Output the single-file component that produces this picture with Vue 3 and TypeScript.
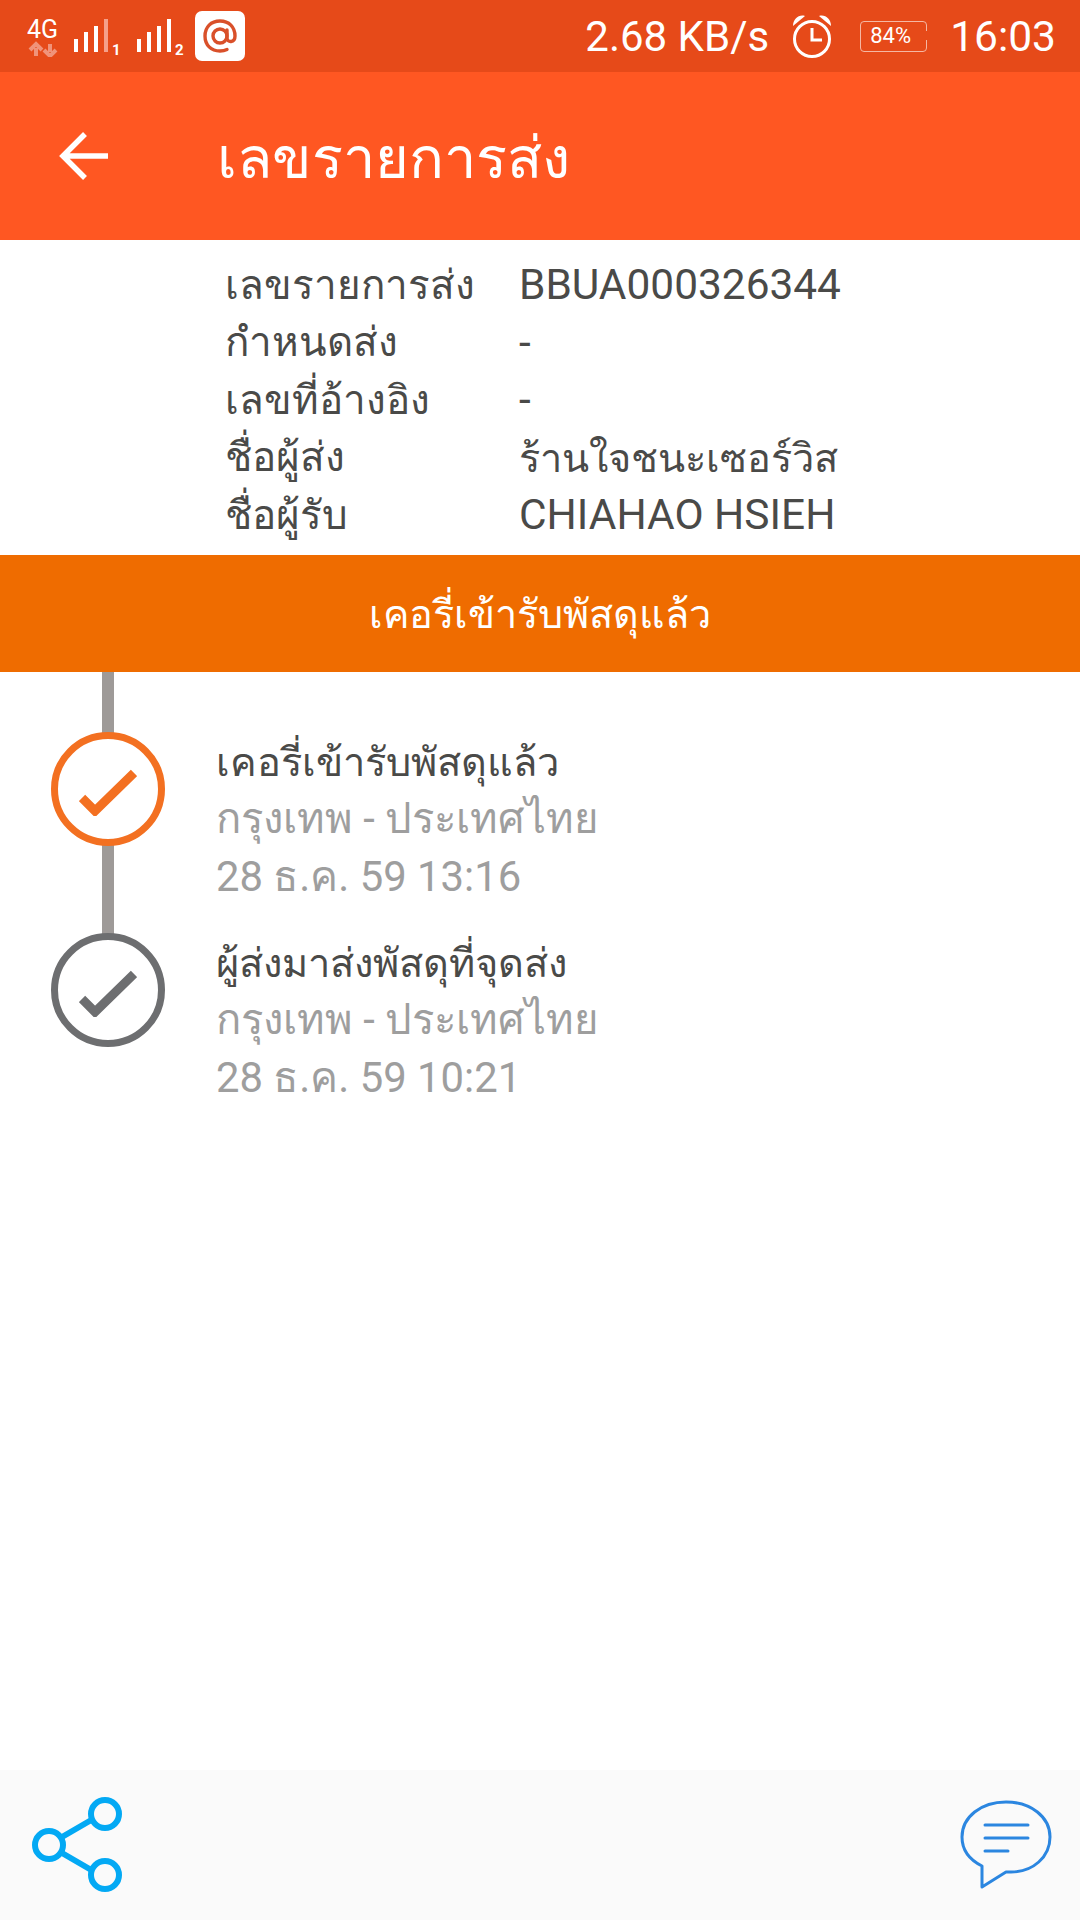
<template>
  <div class="screen">
    <!-- status bar -->
    <div class="status-bar">
      <div class="status-left">
        <svg class="net" width="38" height="42" viewBox="0 0 38 42">
          <text x="0" y="23" class="net-text">4G</text>
          <path d="M9 41V33M3 35l6-6 6 6" fill="none" stroke="#f0937a" stroke-width="4" />
          <path d="M23 29v8M17 35l6 6 6-6" fill="none" stroke="#f0937a" stroke-width="4" />
        </svg>
        <svg class="signal" width="50" height="42" viewBox="0 0 50 42">
          <rect x="0" y="20" width="4" height="13" fill="#fff" />
          <rect x="10" y="13" width="4" height="20" fill="#fff" />
          <rect x="20" y="7" width="4" height="26" fill="#fff" />
          <rect x="30" y="0" width="4" height="33" fill="#f5a08a" />
          <text x="38" y="36" class="sim">1</text>
        </svg>
        <svg class="signal" width="50" height="42" viewBox="0 0 50 42">
          <rect x="0" y="20" width="4" height="13" fill="#fff" />
          <rect x="10" y="13" width="4" height="20" fill="#fff" />
          <rect x="20" y="7" width="4" height="26" fill="#fff" />
          <rect x="30" y="0" width="4" height="33" fill="#fff" />
          <text x="38" y="36" class="sim">2</text>
        </svg>
        <div class="mail-badge">
          <svg width="36" height="36" viewBox="0 0 36 36" fill="none" stroke="#d9502a" stroke-width="3.4">
            <circle cx="18" cy="18" r="7" />
            <path d="M25 12v8c0 5 8 5 8-2C33 9 27 3 18 3S3 9 3 18s6 15 15 15c3 0 5-.5 7-1.500" stroke-linecap="round" />
          </svg>
        </div>
      </div>
      <div class="status-right">
        <span class="speed">2.68 KB/s</span>
        <svg class="alarm" width="40" height="44" viewBox="0 0 40 44" fill="none" stroke="#fff" stroke-width="3">
          <circle cx="20" cy="25" r="17.500" />
          <path d="M20 14v12h10" />
          <path d="M1 12C1 5 7 0 13 2z" fill="#fff" stroke="none" />
          <path d="M39 12C39 5 33 0 27 2z" fill="#fff" stroke="none" />
        </svg>
        <div class="battery">
          <span>84%</span>
          <i class="battery-tip"></i>
        </div>
        <span class="clock">16:03</span>
      </div>
    </div>

    <!-- toolbar -->
    <div class="toolbar">
      <svg class="back" width="50" height="50" viewBox="0 0 50 50" fill="none" stroke="#fff" stroke-width="5.500">
        <path d="M3 25h46M26 3L4 25l22 22" />
      </svg>
      <span class="toolbar-title">เลขรายการส่ง</span>
    </div>

    <!-- shipment details -->
    <div class="details">
      <div v-for="row in details" :key="row.label" class="detail-row">
        <span class="detail-label">{{ row.label }}</span>
        <span class="detail-value" :class="{ latin: row.latin }">{{ row.value }}</span>
      </div>
    </div>

    <div class="banner">เคอรี่เข้ารับพัสดุแล้ว</div>

    <!-- timeline -->
    <div class="timeline">
      <i class="track"></i>
      <div v-for="item in events" :key="item.time" class="event" :class="{ current: item.current }">
        <div class="dot">
          <svg width="58" height="48" viewBox="0 0 58 48" fill="none">
            <path d="M3 30l13 13L55 5" stroke="currentColor" stroke-width="9" />
          </svg>
        </div>
        <div class="event-text">
          <div class="event-title">{{ item.title }}</div>
          <div class="event-sub">{{ item.place }}</div>
          <div class="event-sub">{{ item.time }}</div>
        </div>
      </div>
    </div>

    <!-- bottom bar -->
    <div class="bottom-bar">
      <svg width="94" height="98" viewBox="0 0 94 98" fill="none" stroke="#03a9f4" stroke-width="6">
        <circle cx="17" cy="49" r="14" />
        <circle cx="73" cy="18" r="14" />
        <circle cx="73" cy="79" r="14" />
        <path d="M30 41l31-18M30 57l31 18" />
      </svg>
      <svg width="92" height="90" viewBox="0 0 92 90" fill="none" stroke="#2b86e0" stroke-width="3">
        <path d="M46 2C21 2 2 17 2 37c0 14 8 23 20 29v21l24-15h5c22 0 39-15 39-35C90 17 71 2 46 2z" stroke-linejoin="round" />
        <path d="M25 25h43M25 38h43M25 51h23" stroke-linecap="round" />
      </svg>
    </div>
  </div>
</template>

<script setup lang="ts">
interface DetailRow {
  label: string
  value: string
  latin: boolean
}

interface TrackEvent {
  title: string
  place: string
  time: string
  current: boolean
}

const details: DetailRow[] = [
  { label: 'เลขรายการส่ง', value: 'BBUA000326344', latin: true },
  { label: 'กำหนดส่ง', value: '-', latin: true },
  { label: 'เลขที่อ้างอิง', value: '-', latin: true },
  { label: 'ชื่อผู้ส่ง', value: 'ร้านใจชนะเซอร์วิส', latin: false },
  { label: 'ชื่อผู้รับ', value: 'CHIAHAO HSIEH', latin: true },
]

const events: TrackEvent[] = [
  { title: 'เคอรี่เข้ารับพัสดุแล้ว', place: 'กรุงเทพ - ประเทศไทย', time: '28 ธ.ค. 59 13:16', current: true },
  { title: 'ผู้ส่งมาส่งพัสดุที่จุดส่ง', place: 'กรุงเทพ - ประเทศไทย', time: '28 ธ.ค. 59 10:21', current: false },
]
</script>

<style>
html,
body {
  margin: 0;
  background: #fff;
}
</style>

<style scoped>
.screen {
  width: 1080px;
  height: 1920px;
  display: flex;
  flex-direction: column;
  overflow: hidden;
  background: #fff;
  font-family: Roboto, "Noto Sans", "DejaVu Sans", sans-serif;
}

.status-bar {
  height: 72px;
  flex-shrink: 0;
  display: flex;
  align-items: center;
  justify-content: space-between;
  padding: 0 24px 0 27px;
  box-sizing: border-box;
  background: #e64a19;
  color: #fff;
}

.status-left {
  display: flex;
  align-items: center;
}

.net {
  margin-right: 9px;
}

.net-text {
  font-size: 25px;
  fill: #fff;
}

.signal {
  margin-right: 13px;
  margin-top: 8px;
}

.sim {
  font-size: 15px;
  font-weight: 700;
  fill: #fff;
}

.mail-badge {
  width: 50px;
  height: 50px;
  margin-left: -5px;
  border-radius: 7px;
  background: #fff;
  display: flex;
  align-items: center;
  justify-content: center;
}

.status-right {
  display: flex;
  align-items: center;
}

.speed {
  font-size: 42px;
  margin-right: 23px;
}

.alarm {
  margin-right: 28px;
}

.battery {
  position: relative;
  width: 67px;
  height: 31px;
  box-sizing: border-box;
  border: 1.5px solid #f5b7a3;
  border-radius: 4px;
  margin-right: 23px;
  font-size: 22px;
  line-height: 28px;
  padding-left: 9px;
}

.battery-tip {
  position: absolute;
  right: -2px;
  top: 9px;
  width: 2px;
  height: 9px;
  background: #e64a19;
}

.clock {
  font-size: 42.500px;
}

.toolbar {
  height: 168px;
  flex-shrink: 0;
  display: flex;
  align-items: center;
  padding-left: 59px;
  background: #ff5722;
}

.back {
  margin-right: 108px;
}

.toolbar-title {
  font-size: 57.800px;
  color: #fff;
  line-height: 1;
  padding-top: 6px;
}

.details {
  height: 315px;
  flex-shrink: 0;
  box-sizing: border-box;
  padding: 16px 0 0 225px;
  color: #4a4a48;
  font-size: 40.400px;
}

.detail-row {
  height: 57.500px;
  display: flex;
  align-items: center;
}

.detail-label {
  width: 294px;
}

.detail-value {
  font-size: 39.700px;
}

.detail-value.latin {
  font-size: 42.400px;
}

.banner {
  height: 117px;
  flex-shrink: 0;
  display: flex;
  align-items: center;
  justify-content: center;
  background: #ef6c00;
  color: #fff;
  font-size: 39.600px;
}

.timeline {
  position: relative;
  flex: 1;
  padding-top: 60px;
}

.track {
  position: absolute;
  left: 102px;
  top: 0;
  width: 12px;
  height: 270px;
  background: #9e9a98;
}

.event {
  position: relative;
  height: 201px;
  display: flex;
  padding-left: 51px;
}

.dot {
  width: 114px;
  height: 114px;
  flex-shrink: 0;
  box-sizing: border-box;
  border: 7px solid #6d6e70;
  border-radius: 50%;
  background: #fff;
  color: #6d6e70;
  display: flex;
  align-items: center;
  justify-content: center;
  padding-top: 6px;
}

.event.current .dot {
  border-color: #f37021;
  color: #f37021;
}

.dot svg {
  display: block;
}

.event-text {
  margin-left: 51px;
  padding-top: 6px;
}

.event-title {
  height: 52px;
  line-height: 50px;
  font-size: 39.800px;
  color: #4a4a48;
}

.event-sub {
  height: 57.500px;
  line-height: 57.500px;
  font-size: 41.800px;
  color: #9e9e9e;
}

.bottom-bar {
  height: 150px;
  flex-shrink: 0;
  display: flex;
  align-items: center;
  justify-content: space-between;
  padding: 0 28px 0 32px;
  background: #fafafa;
}
</style>
